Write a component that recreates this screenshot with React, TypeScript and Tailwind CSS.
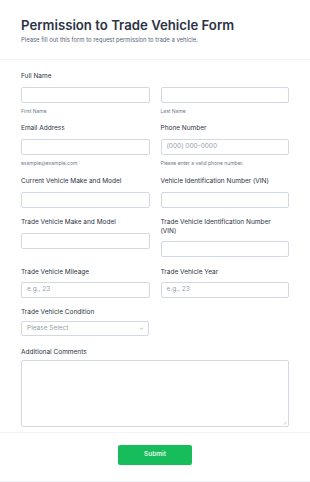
const Label = ({ children, className = "mb-[6px]" }: { children: React.ReactNode; className?: string }) => (
    <div className={"text-[6.5px] leading-[8.5px] font-normal text-[#2c3345] " + className}>{children}</div>
);

const Input = ({ placeholder }: { placeholder?: string }) => (
    <div className="h-[16px] border border-[#d3d8e3] rounded-[2px] bg-white px-[5px] flex items-center text-[6.5px] text-[#949cab]">
        {placeholder}
    </div>
);

const Sub = ({ children }: { children: React.ReactNode }) => (
    <div className="mt-[5px] text-[5px] leading-[6px] text-[#6f7a8f]">{children}</div>
);

const App = () => {
    return (
        <div className="w-[310px] h-[482px] bg-white font-['Inter',sans-serif] border-b border-[#eef0f5]">
            <div className="px-[21px] pt-[17px] pb-[15px] border-b border-[#f3f3f8]">
                <h1 className="text-[13.2px] leading-[16px] font-semibold text-[#2c3345]">Permission to Trade Vehicle Form</h1>
                <p className="mt-[3px] text-[5.9px] leading-[8px] text-[#57647e]">
                    Please fill out this form to request permission to trade a vehicle.
                </p>
            </div>

            <div className="px-[21px] pt-[12px] pb-[5px] border-b border-[#f3f3f8]">
                <div className="grid grid-cols-2 gap-x-[11px] gap-y-[10.5px]">
                    <div>
                        <Label>Full Name</Label>
                        <Input />
                        <Sub>First Name</Sub>
                    </div>
                    <div>
                        <div className="h-[8.5px] mb-[6px]"></div>
                        <Input />
                        <Sub>Last Name</Sub>
                    </div>
                    <div>
                        <Label>Email Address</Label>
                        <Input />
                        <Sub>example@example.com</Sub>
                    </div>
                    <div>
                        <Label>Phone Number</Label>
                        <Input placeholder="(000) 000-0000" />
                        <Sub>Please enter a valid phone number.</Sub>
                    </div>
                    <div className="mt-[1px]">
                        <Label>Current Vehicle Make and Model</Label>
                        <Input />
                    </div>
                    <div className="mt-[1px]">
                        <Label>Vehicle Identification Number (VIN)</Label>
                        <Input />
                    </div>
                    <div>
                        <Label>Trade Vehicle Make and Model</Label>
                        <Input />
                    </div>
                    <div>
                        <Label>
                            Trade Vehicle Identification Number
                            <br />
                            (VIN)
                        </Label>
                        <Input />
                    </div>
                    <div>
                        <Label>Trade Vehicle Mileage</Label>
                        <Input placeholder="e.g., 23" />
                    </div>
                    <div>
                        <Label>Trade Vehicle Year</Label>
                        <Input placeholder="e.g., 23" />
                    </div>
                    <div className="pr-[1px] -mt-[1px]">
                        <Label className="mb-[5px]">Trade Vehicle Condition</Label>
                        <div className="h-[15px] border border-[#d3d8e3] rounded-[2px] pl-[5px] pr-[4px] flex items-center justify-between text-[6.5px] text-[#949cab]">
                            <span>Please Select</span>
                            <svg className="w-[5px] h-[5px]" viewBox="0 0 10 10" fill="none" stroke="#8d97ab" strokeWidth="1.3">
                                <path d="M2 3.5l3 3 3-3" />
                            </svg>
                        </div>
                    </div>
                    <div></div>
                    <div className="col-span-2 mt-[1px]">
                        <Label className="mb-[4px]">Additional Comments</Label>
                        <div className="relative">
                            <textarea className="block w-full h-[67px] border border-[#d3d8e3] rounded-[2px] resize-none outline-none"></textarea>
                            <svg className="absolute right-[2px] bottom-[2px] w-[4px] h-[4px]" viewBox="0 0 4 4" stroke="#b8bfcc" strokeWidth="0.6">
                                <path d="M0.5 3.5L3.5 0.5M2 3.5L3.5 2" />
                            </svg>
                        </div>
                    </div>
                </div>
            </div>

            <div className="flex justify-center pt-[12px]">
                <button className="w-[74px] h-[20px] bg-[#18bd5b] rounded-[2px] text-white text-[6.5px] font-medium">
                    Submit
                </button>
            </div>
        </div>
    );
};

export default App;
